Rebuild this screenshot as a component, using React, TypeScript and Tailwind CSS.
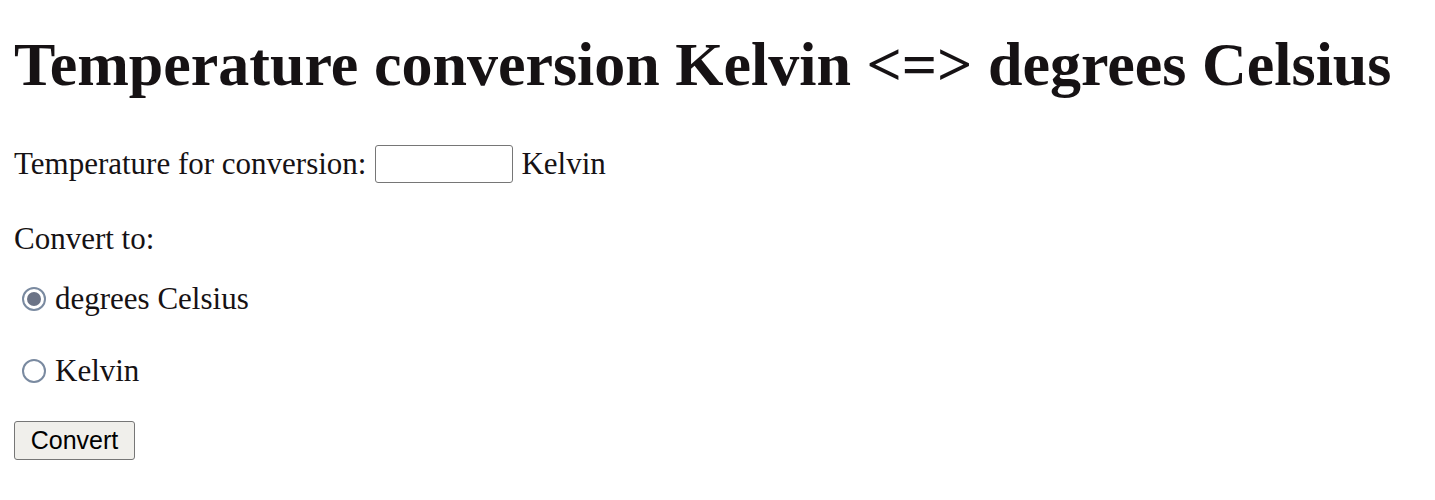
import { useState } from 'react';

export default function App() {
  const [value, setValue] = useState('');
  const [target, setTarget] = useState<'celsius' | 'kelvin'>('celsius');

  const radio = (checked: boolean) => (
    <span className="flex h-[24px] w-[24px] shrink-0 items-center justify-center rounded-full border-2 border-[#7a8aa0] bg-white">
      {checked && <span className="h-[14px] w-[14px] rounded-full bg-[#6b7386]" />}
    </span>
  );

  return (
    <div className="min-h-[500px] bg-white px-[14px] font-['Liberation_Serif',serif] text-[#161214]">
      <h1 className="pt-[28px] text-[62px] font-bold leading-[72px]">
        Temperature conversion Kelvin &lt;=&gt; degrees Celsius
      </h1>

      <div className="mt-[44px] flex items-center text-[31px] leading-[40px]">
        <span>Temperature for conversion:</span>
        <input
          type="text"
          value={value}
          onChange={(e) => setValue(e.target.value)}
          className="ml-[9px] h-[38px] w-[138px] rounded-[3px] border-[1.5px] border-[#767676] bg-white outline-none"
        />
        <span className="ml-[8px]">Kelvin</span>
      </div>

      <p className="mt-[35px] text-[31px] leading-[40px]">Convert to:</p>

      <label
        className="mt-[20px] flex cursor-pointer items-center pl-[8px] text-[31px] leading-[40px]"
        onClick={() => setTarget('celsius')}
      >
        {radio(target === 'celsius')}
        <span className="ml-[9px]">degrees Celsius</span>
      </label>

      <label
        className="mt-[32px] flex cursor-pointer items-center pl-[8px] text-[31px] leading-[40px]"
        onClick={() => setTarget('kelvin')}
      >
        {radio(target === 'kelvin')}
        <span className="ml-[9px]">Kelvin</span>
      </label>

      <button className="mt-[30px] h-[39px] w-[121px] rounded-[3px] border-[1.5px] border-[#767676] bg-[#f0efeb] font-['Liberation_Sans',sans-serif] text-[25px] leading-none text-black">
        Convert
      </button>
    </div>
  );
}
